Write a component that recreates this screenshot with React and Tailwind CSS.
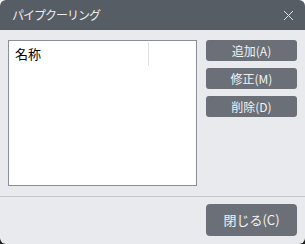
const font = { fontFamily: '"Noto Sans CJK JP", "Noto Sans", sans-serif' };

const SideButton = ({ label }) => (
  <button className="h-[21px] w-[91px] rounded-[3px] bg-[#6b7078] text-[12px] leading-none text-[#f2f2f2]">
    {label}
  </button>
);

export default function App() {
  return (
    <div
      className="w-[305px] h-[244px] bg-[linear-gradient(to_bottom,#ffffff_50%,#1f1f1f_50%)]"
      style={font}
    >
      <div className="flex h-full w-full flex-col overflow-hidden rounded-[6px] bg-[#e9eaed]">
        {/* title bar */}
        <div className="flex h-[30px] shrink-0 items-center justify-between bg-[#575d65] pl-[12px] pr-[12px]">
          <span className="text-[12px] tracking-[-1px] text-[#ececec]">パイプクーリング</span>
          <svg width="11" height="11" viewBox="0 0 11 11" className="mr-[-1px]">
            <path d="M1 1 L10 10 M10 1 L1 10" stroke="#e0e0e0" strokeWidth="1" />
          </svg>
        </div>

        {/* content */}
        <div className="flex gap-[9px] px-[8px] pt-[10px]">
          <div className="h-[146px] w-[189px] border border-[#8a8e96] bg-white">
            <div className="flex h-[26px] items-center">
              <div className="flex h-[24px] w-[140px] items-center border-r border-[#e3e3e3] pl-[6px] text-[13px] text-black">
                名称
              </div>
            </div>
          </div>
          <div className="flex flex-col gap-[7px]">
            <SideButton label="追加(A)" />
            <SideButton label="修正(M)" />
            <SideButton label="削除(D)" />
          </div>
        </div>

        <div className="mt-[10px] border-t border-[#c4c7cc]" />

        <div className="flex justify-end pr-[8px] pt-[7px]">
          <button className="h-[32px] w-[91px] rounded-[4px] bg-[#6b7078] text-[13px] text-[#f2f2f2]">
            閉じる(C)
          </button>
        </div>
      </div>
    </div>
  );
}
